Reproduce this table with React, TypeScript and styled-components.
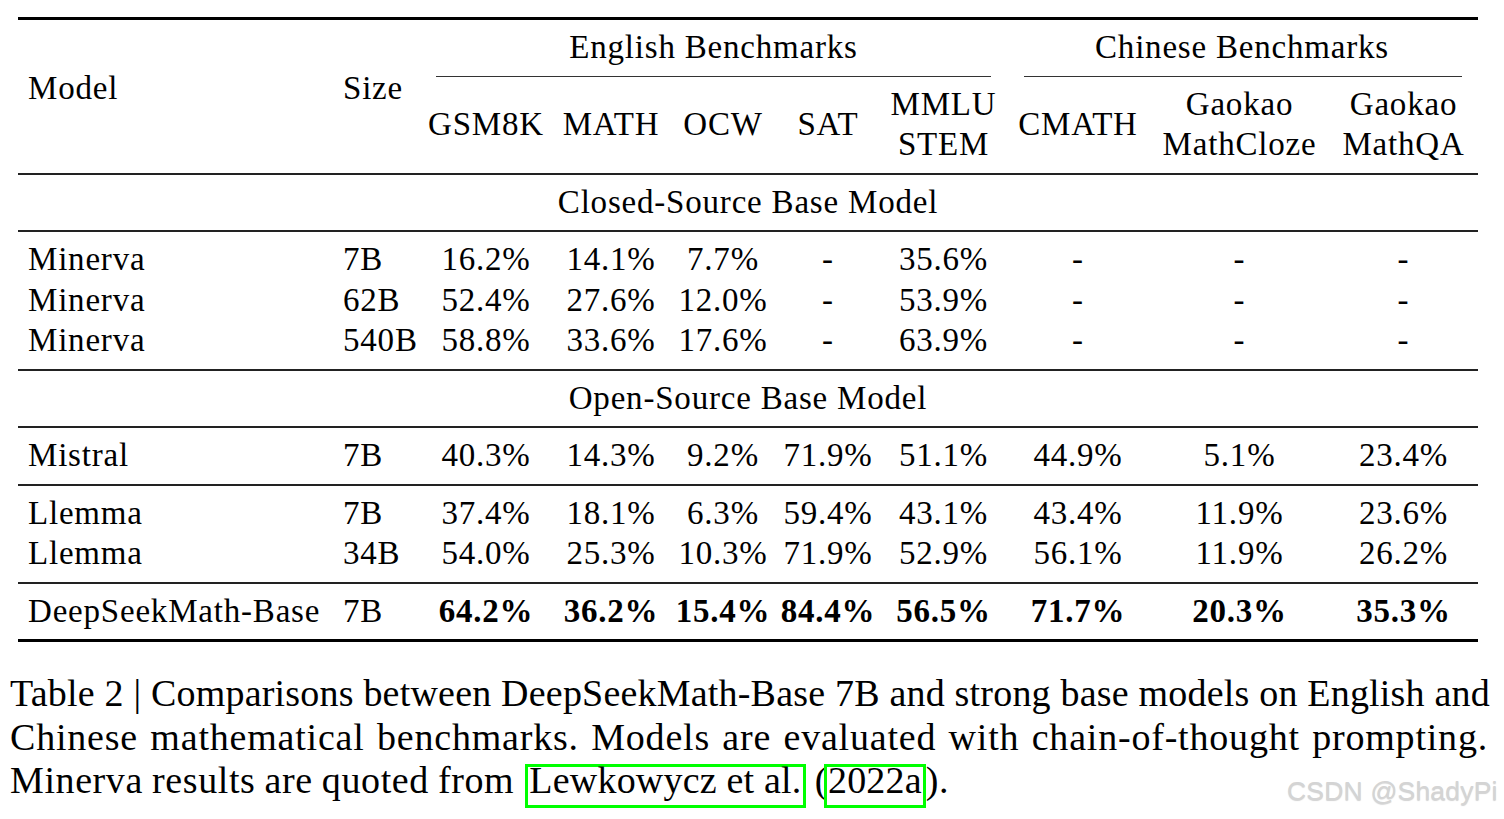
import React from "react";
import styled, { createGlobalStyle } from "styled-components";

const COLS = "315px 88px 130px 120px 104px 106px 125px 144px 179px 149px";

const GlobalStyle = createGlobalStyle`
  html, body { margin: 0; padding: 0; background: #ffffff; }
  body { font-family: "Liberation Serif", "Times New Roman", serif; color: #000; }
`;

const Page = styled.div`
  position: relative;
  width: 1504px;
  height: 819px;
  overflow: hidden;
  background: #fff;
`;

const Table = styled.div`
  width: 1460px;
  margin: 17px 0 0 18px;
  font-size: 33px;
  letter-spacing: 0.8px;
`;

const Rule = styled.div<{ $h: number; $c?: string }>`
  height: ${(p) => p.$h}px;
  background: ${(p) => p.$c || "#000"};
`;

const Header = styled.div`
  display: grid;
  grid-template-columns: ${COLS};
  grid-template-rows: 47.5px 16px 89px;
`;

const HeadLabel = styled.div<{ $col: number }>`
  grid-column: ${(p) => p.$col};
  grid-row: 1 / 4;
  padding: 48px 0 0 10px;
  line-height: 40.5px;
`;

const GroupTitle = styled.div<{ $span: string }>`
  grid-column: ${(p) => p.$span};
  grid-row: 1;
  padding-top: 7px;
  line-height: 40.5px;
  text-align: center;
`;

const CmidRule = styled.div<{ $span: string; $l: number; $r: number }>`
  grid-column: ${(p) => p.$span};
  grid-row: 2;
  height: 1px;
  margin: 8.5px ${(p) => p.$r}px 0 ${(p) => p.$l}px;
  background: #333;
`;

const SubHead = styled.div<{ $col: number }>`
  grid-column: ${(p) => p.$col};
  grid-row: 3;
  align-self: start;
  height: 81px;
  display: flex;
  flex-direction: column;
  justify-content: center;
  align-items: center;
  line-height: 40.5px;
  white-space: nowrap;
`;

const SectionTitle = styled.div`
  padding: 7px 0 8px;
  line-height: 40.5px;
  text-align: center;
`;

const Section = styled.div`
  padding: 7px 0 8px;
`;

const Row = styled.div`
  display: grid;
  grid-template-columns: ${COLS};
  height: 40.5px;
  line-height: 40.5px;
`;

const Cell = styled.div<{ $left?: boolean; $bold?: boolean }>`
  text-align: ${(p) => (p.$left ? "left" : "center")};
  padding-left: ${(p) => (p.$left ? "10px" : "0")};
  font-weight: ${(p) => (p.$bold ? 700 : 400)};
  white-space: nowrap;
`;

const Caption = styled.div`
  margin: 30px 0 0 10px;
  width: 1478px;
  font-size: 38px;
  line-height: 43.5px;
`;

const CapLine = styled.div<{ $justify?: boolean; $ls: number; $ws?: number }>`
  white-space: nowrap;
  letter-spacing: ${(p) => p.$ls}px;
  word-spacing: ${(p) => p.$ws || 0}px;
  text-align: ${(p) => (p.$justify ? "justify" : "left")};
  text-align-last: ${(p) => (p.$justify ? "justify" : "left")};
`;

const LinkBox = styled.span<{ $gap?: number }>`
  display: inline-block;
  line-height: 26px;
  letter-spacing: 0.2px;
  word-spacing: 0;
  border: 3px solid #00ff00;
  padding: 0 1px 12px 1px;
  margin-left: ${(p) => p.$gap || 0}px;
  vertical-align: baseline;
`;

const Watermark = styled.div`
  position: absolute;
  left: 1287px;
  top: 776px;
  font-family: "Liberation Sans", Arial, sans-serif;
  font-size: 26.5px;
  letter-spacing: 0.2px;
  color: #d4d4d4;
  text-shadow: 0 1px 1px rgba(0, 0, 0, 0.18);
  white-space: nowrap;
`;

type R = { model: string; size: string; vals: string[]; bold?: boolean };

const minerva: R[] = [
  { model: "Minerva", size: "7B", vals: ["16.2%", "14.1%", "7.7%", "-", "35.6%", "-", "-", "-"] },
  { model: "Minerva", size: "62B", vals: ["52.4%", "27.6%", "12.0%", "-", "53.9%", "-", "-", "-"] },
  { model: "Minerva", size: "540B", vals: ["58.8%", "33.6%", "17.6%", "-", "63.9%", "-", "-", "-"] },
];
const mistral: R[] = [
  { model: "Mistral", size: "7B", vals: ["40.3%", "14.3%", "9.2%", "71.9%", "51.1%", "44.9%", "5.1%", "23.4%"] },
];
const llemma: R[] = [
  { model: "Llemma", size: "7B", vals: ["37.4%", "18.1%", "6.3%", "59.4%", "43.1%", "43.4%", "11.9%", "23.6%"] },
  { model: "Llemma", size: "34B", vals: ["54.0%", "25.3%", "10.3%", "71.9%", "52.9%", "56.1%", "11.9%", "26.2%"] },
];
const deepseek: R[] = [
  { model: "DeepSeekMath-Base", size: "7B", bold: true, vals: ["64.2%", "36.2%", "15.4%", "84.4%", "56.5%", "71.7%", "20.3%", "35.3%"] },
];

const DataRows = ({ rows }: { rows: R[] }) => (
  <Section>
    {rows.map((r, i) => (
      <Row key={i}>
        <Cell $left>{r.model}</Cell>
        <Cell $left>{r.size}</Cell>
        {r.vals.map((v, j) => (
          <Cell key={j} $bold={r.bold}>
            {v}
          </Cell>
        ))}
      </Row>
    ))}
  </Section>
);

const subHeads: string[][] = [
  ["GSM8K"],
  ["MATH"],
  ["OCW"],
  ["SAT"],
  ["MMLU", "STEM"],
  ["CMATH"],
  ["Gaokao", "MathCloze"],
  ["Gaokao", "MathQA"],
];

export default function App() {
  return (
    <Page>
      <GlobalStyle />
      <Table>
        <Rule $h={3} />
        <Header>
          <HeadLabel $col={1}>Model</HeadLabel>
          <HeadLabel $col={2}>Size</HeadLabel>
          <GroupTitle $span="3 / 8">English Benchmarks</GroupTitle>
          <GroupTitle $span="8 / 11">Chinese Benchmarks</GroupTitle>
          <CmidRule $span="3 / 8" $l={15} $r={15} />
          <CmidRule $span="8 / 11" $l={18} $r={16} />
          {subHeads.map((lines, i) => (
            <SubHead key={i} $col={i + 3}>
              {lines.map((l) => (
                <span key={l}>{l}</span>
              ))}
            </SubHead>
          ))}
        </Header>
        <Rule $h={2} $c="#222" />
        <SectionTitle>Closed-Source Base Model</SectionTitle>
        <Rule $h={2} $c="#222" />
        <DataRows rows={minerva} />
        <Rule $h={2} $c="#222" />
        <SectionTitle>Open-Source Base Model</SectionTitle>
        <Rule $h={2} $c="#222" />
        <DataRows rows={mistral} />
        <Rule $h={2} $c="#222" />
        <DataRows rows={llemma} />
        <Rule $h={2} $c="#222" />
        <DataRows rows={deepseek} />
        <Rule $h={3} />
      </Table>
      <Caption>
        <CapLine $justify $ls={0.2}>
          Table 2 | Comparisons between DeepSeekMath-Base 7B and strong base models on English and
        </CapLine>
        <CapLine $justify $ls={0.8}>
          Chinese mathematical benchmarks. Models are evaluated with chain-of-thought prompting.
        </CapLine>
        <CapLine $ls={0.6} $ws={-1}>
          Minerva results are quoted from <LinkBox $gap={2}>Lewkowycz et al.</LinkBox>
          {" ("}
          <LinkBox $gap={-4}>2022a</LinkBox>).
        </CapLine>
      </Caption>
      <Watermark>CSDN @ShadyPi</Watermark>
    </Page>
  );
}
